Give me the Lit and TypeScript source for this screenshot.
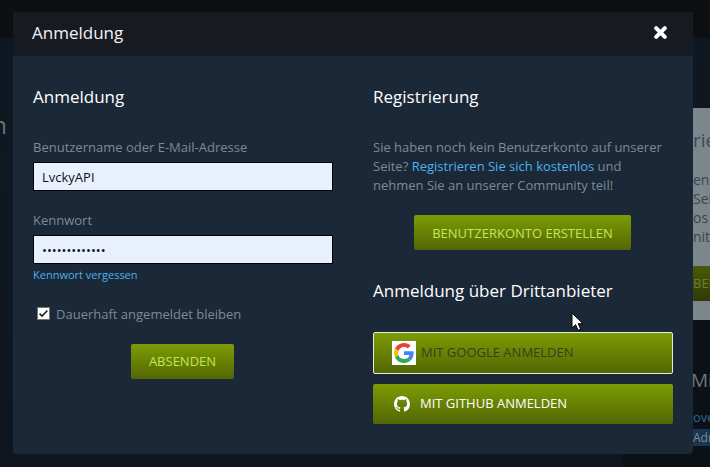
import {html, css, LitElement} from 'lit';
import {customElement} from 'lit/decorators.js';

@customElement('app-root')
export class AppRoot extends LitElement {
	static styles = css`
		* {
			box-sizing: border-box;
			margin: 0;
			padding: 0;
		}

		:host {
			display: block;
			position: relative;
			width: 710px;
			height: 467px;
			overflow: hidden;
			background: #10161f;
			font-family: "Open Sans", "Liberation Sans", sans-serif;
			font-size: 13px;
			color: #7d8a97;
		}

		/* dimmed page behind the dialog */
		.topbar {
			height: 38px;
			background: #0d0f13;
		}

		.page {
			display: flex;
			height: 429px;
		}

		.page-left {
			width: 13px;
			background: linear-gradient(#0f1822, #10161f);
			overflow: hidden;
			direction: rtl;
			padding: 71px 6px 0 0;
			font-size: 24px;
			line-height: 32px;
			color: #6b7177;
		}

		.page-mid {
			flex: 1;
			display: flex;
			justify-content: flex-end;
		}

		.page-mid-aside {
			width: 70px;
			background: #0c1118;
		}

		.page-right {
			width: 17px;
			overflow: hidden;
			white-space: nowrap;
			background: #0f1822;
		}

		.teaser {
			margin-top: 70px;
			height: 212px;
			padding-top: 20px;
			background: #7c878d;
			color: #3a464f;
			line-height: 19px;
		}

		.teaser h4 {
			font-size: 19px;
			font-weight: 400;
			line-height: 24px;
			margin-bottom: 18px;
			color: #3d4a55;
		}

		.teaser p {
			font-size: 14px;
		}

		.teaser .more {
			margin-top: 20px;
			height: 35px;
			line-height: 35px;
			background: linear-gradient(#4a5a07, #303a05);
			color: #6f7a32;
		}

		.members {
			height: 147px;
			background: #0c1118;
			padding-top: 47px;
		}

		.members h4 {
			font-size: 19px;
			font-weight: 400;
			line-height: 26px;
			text-indent: -2px;
			color: #6b7680;
		}

		.members .link {
			margin-top: 15px;
			font-size: 13px;
			line-height: 18px;
			color: #2b6a92;
		}

		.members .tag {
			margin-top: 3px;
			height: 17px;
			line-height: 17px;
			background: #1b3450;
			color: #7b8895;
			font-size: 12px;
		}

		/* dialog */
		.dialog {
			position: absolute;
			left: 13px;
			top: 12px;
			width: 680px;
			height: 442px;
			background: #1b2838;
			border-radius: 0 0 4px 4px;
			overflow: hidden;
		}

		.dialog-head {
			display: flex;
			align-items: center;
			justify-content: space-between;
			height: 44px;
			padding: 0 26px 3px 19px;
			background: #171a21;
			color: #f2f4f5;
			font-size: 17px;
			font-weight: 500;
		}

		.close {
			display: block;
			width: 13px;
			height: 13px;
		}

		.dialog-body {
			display: grid;
			grid-template-columns: 300px 300px;
			column-gap: 40px;
			padding: 0 20px;
		}

		h3 {
			font-size: 17px;
			font-weight: 500;
			line-height: 24px;
			color: #fff;
		}

		.col > h3:first-child {
			margin-top: 29px;
		}

		label.field {
			display: block;
			line-height: 18px;
			margin-top: 20px;
		}

		.col h3 + label.field {
			margin-top: 29px;
		}

		.text {
			display: block;
			width: 300px;
			height: 29px;
			margin-top: 6px;
			padding: 0 8px;
			border: 1px solid #000;
			background: #e8f0fe;
			color: #111;
			font-family: inherit;
			font-size: 13px;
			outline: none;
		}

		a {
			color: #4db1ec;
			text-decoration: none;
		}

		.forgot {
			display: block;
			margin-top: 3px;
			font-size: 11px;
			font-weight: 500;
			line-height: 16px;
		}

		.keep {
			display: flex;
			align-items: center;
			gap: 6px;
			margin: 22px 0 0 4px;
			line-height: 18px;
		}

		.box {
			display: block;
			width: 13px;
			height: 13px;
			background: #fff;
			border: 1px solid #767676;
			margin-top: -1px;
		}

		.btn {
			display: flex;
			align-items: center;
			justify-content: center;
			background: linear-gradient(#7d9c04, #536604);
			border: 0;
			border-radius: 2px;
			color: #c3e654;
			font-family: inherit;
			font-size: 13px;
			text-transform: uppercase;
		}

		.submit {
			width: 103px;
			height: 35px;
			margin: 21px 0 0 98px;
			padding-bottom: 1px;
		}

		.intro {
			margin-top: 29px;
			line-height: 19px;
			font-size: 13px;
		}

		.create {
			width: 217px;
			height: 35px;
			margin: 20px 0 0 41px;
		}

		.col h3.third {
			margin-top: 29px;
		}

		.social {
			width: 300px;
			justify-content: flex-start;
		}

		.social span {
			position: relative;
			top: -1px;
		}

		.google {
			height: 42px;
			margin-top: 29px;
			padding-left: 18px;
			border: 1px solid #e9ecdc;
			color: #39401f;
			gap: 5px;
		}

		.g-logo {
			display: block;
			width: 24px;
			height: 24px;
			padding: 2px;
			background: #fff;
		}

		.github {
			height: 40px;
			margin-top: 10px;
			padding-left: 21px;
			color: #fff;
			font-weight: 500;
			gap: 10px;
		}

		.gh-logo {
			display: block;
			width: 16px;
			height: 16px;
			fill: #fff;
		}

		.cursor {
			position: absolute;
			left: 571px;
			top: 312px;
			width: 13px;
			height: 19px;
		}
	`;

	render() {
		return html`
			<div class="topbar"></div>
			<div class="page">
				<div class="page-left">Anmelden</div>
				<div class="page-mid"><div class="page-mid-aside"></div></div>
				<div class="page-right">
					<div class="teaser">
						<h4>rie</h4>
						<p>en n</p>
						<p>Sei</p>
						<p>os u</p>
						<p>nity</p>
						<div class="more">BEN</div>
					</div>
					<div class="members">
						<h4>Mi</h4>
						<div class="link">ove</div>
						<div class="tag">Adm</div>
					</div>
				</div>
			</div>

			<section class="dialog">
				<header class="dialog-head">
					<span>Anmeldung</span>
					<svg class="close" viewBox="0 0 13 13">
						<path d="M2.2 2.2l8.6 8.6M10.8 2.2l-8.6 8.6" stroke="#fff" stroke-width="4" stroke-linecap="round" fill="none" />
					</svg>
				</header>
				<div class="dialog-body">
					<div class="col">
						<h3>Anmeldung</h3>
						<label class="field">
							Benutzername oder E-Mail-Adresse
							<input class="text" type="text" value="LvckyAPI" />
						</label>
						<label class="field">
							Kennwort
							<input class="text" type="password" value="1234567890123" />
						</label>
						<a class="forgot" href="#">Kennwort vergessen</a>
						<div class="keep">
							<svg class="box" viewBox="0 0 11 11">
								<path d="M1.5 5.6l2.6 2.5 5.3-5.6" stroke="#222" stroke-width="1.6" fill="none" />
							</svg>
							<span>Dauerhaft angemeldet bleiben</span>
						</div>
						<button class="btn submit">Absenden</button>
					</div>
					<div class="col">
						<h3>Registrierung</h3>
						<p class="intro">
							Sie haben noch kein Benutzerkonto auf unserer Seite?
							<a href="#">Registrieren Sie sich kostenlos</a> und nehmen Sie an unserer Community teil!
						</p>
						<button class="btn create">Benutzerkonto erstellen</button>
						<h3 class="third">Anmeldung über Drittanbieter</h3>
						<button class="btn social google">
							<svg class="g-logo" viewBox="0 0 48 48">
								<path fill="#EA4335" d="M24 9.5c3.54 0 6.71 1.22 9.21 3.6l6.85-6.85C35.9 2.38 30.47 0 24 0 14.62 0 6.51 5.38 2.56 13.22l7.98 6.19C12.43 13.72 17.74 9.5 24 9.5z" />
								<path fill="#4285F4" d="M46.98 24.55c0-1.57-.15-3.09-.38-4.55H24v9.02h12.94c-.58 2.96-2.26 5.48-4.78 7.18l7.73 6c4.51-4.18 7.09-10.36 7.09-17.65z" />
								<path fill="#FBBC05" d="M10.53 28.59c-.48-1.45-.76-2.99-.76-4.59s.27-3.14.76-4.59l-7.98-6.19C.92 16.46 0 20.12 0 24c0 3.88.92 7.54 2.56 10.78l7.97-6.19z" />
								<path fill="#34A853" d="M24 48c6.48 0 11.93-2.13 15.89-5.81l-7.73-6c-2.15 1.45-4.92 2.3-8.16 2.3-6.26 0-11.57-4.22-13.47-9.91l-7.98 6.19C6.51 42.62 14.62 48 24 48z" />
							</svg>
							<span>Mit Google anmelden</span>
						</button>
						<button class="btn social github">
							<svg class="gh-logo" viewBox="0 0 16 16">
								<path d="M8 0C3.58 0 0 3.58 0 8c0 3.54 2.29 6.53 5.47 7.59.4.07.55-.17.55-.38 0-.19-.01-.82-.01-1.49-2.01.37-2.53-.49-2.69-.94-.09-.23-.48-.94-.82-1.13-.28-.15-.68-.52-.01-.53.63-.01 1.08.58 1.23.82.72 1.21 1.87.87 2.33.66.07-.52.28-.87.51-1.07-1.78-.2-3.64-.89-3.64-3.95 0-.87.31-1.59.82-2.15-.08-.2-.36-1.02.08-2.12 0 0 .67-.21 2.2.82.64-.18 1.32-.27 2-.27s1.36.09 2 .27c1.53-1.04 2.2-.82 2.2-.82.44 1.1.16 1.92.08 2.12.51.56.82 1.27.82 2.15 0 3.07-1.87 3.75-3.65 3.95.29.25.54.73.54 1.48 0 1.07-.01 1.93-.01 2.2 0 .21.15.46.55.38A8.01 8.01 0 0 0 16 8c0-4.42-3.58-8-8-8z" />
							</svg>
							<span>Mit GitHub anmelden</span>
						</button>
					</div>
				</div>
			</section>

			<svg class="cursor" viewBox="0 0 13 19">
				<path d="M1 1v15l3.6-3.3 2.5 5.6 2.6-1.2-2.5-5.4h4.8z" fill="#fff" stroke="#000" stroke-width="1" />
			</svg>
		`;
	}
}
